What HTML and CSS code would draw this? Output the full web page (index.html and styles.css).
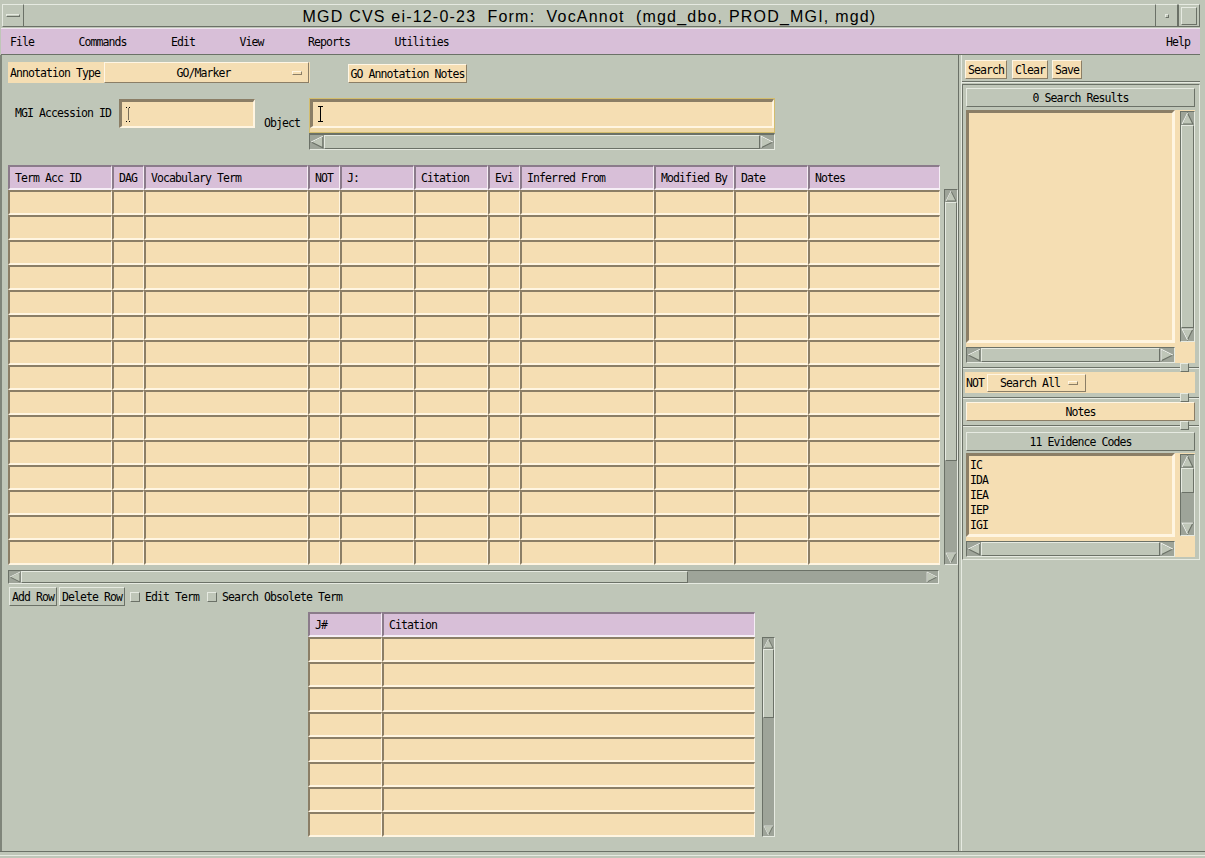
FILE: index.html
```html
<!DOCTYPE html>
<html>
<head>
<meta charset="utf-8">
<title>VocAnnot</title>
<link rel="stylesheet" href="styles.css">
</head>
<body>
<div class="win">
  <header class="titlebar">
    <div class="tb-menu"><span class="tb-dash"></span></div>
    <div class="tb-title">MGD CVS ei-12-0-23&nbsp; Form:&nbsp; VocAnnot&nbsp; (mgd_dbo, PROD_MGI, mgd)</div>
    <div class="tb-min"><span class="tb-dot"></span></div>
    <div class="tb-max"><span class="tb-box"></span></div>
  </header>
  <nav class="menubar">
    <span class="mi">File</span><span class="mi">Commands</span><span class="mi">Edit</span><span class="mi">View</span><span class="mi">Reports</span><span class="mi">Utilities</span><span class="mi help">Help</span>
  </nav>
  <div class="content">
    <section class="main">
      <div class="row1">
        <div class="anno">
          <span class="anno-lbl">Annotation Type</span>
          <div class="opt opt-anno"><span class="opt-text">GO/Marker</span><span class="opt-dash"></span></div>
        </div>
        <div class="btn btn-wheat btn-notes">GO Annotation Notes</div>
      </div>
      <div class="row2">
        <span class="lbl lbl-mgi">MGI Accession ID</span>
        <div class="tf tf-mgi"><svg class="caret caret-dot" viewBox="0 0 7 15"><path d="M1 0.5h2M4 0.5h2M3.5 1.5v12M1 14.5h2M4 14.5h2" stroke="#000" stroke-width="1" stroke-dasharray="1 1" fill="none"/></svg></div>
        <span class="lbl lbl-obj">Object</span>
        <div class="objblock">
          <div class="objfocus"><div class="tf tf-obj"><svg class="caret" viewBox="0 0 7 16"><path d="M1 0.5h5M3.5 0.5v15M1 15.5h5" stroke="#000" stroke-width="1" fill="none"/></svg></div></div>
          <div class="hsb hsb-obj">
            <svg class="arr" viewBox="0 0 12 12"><polygon points="1,6 11,1 11,11" class="ap"/><polyline points="11,1 1,6" class="al"/></svg>
            <div class="thumb fill"></div>
            <svg class="arr" viewBox="0 0 12 12"><polygon points="11,6 1,1 1,11" class="ap"/><polyline points="1,11 1,1 11,6" class="al"/></svg>
          </div>
        </div>
      </div>

      <div class="tablewrap">
        <div class="grid grid-main">
          <div class="h">Term Acc ID</div><div class="h">DAG</div><div class="h">Vocabulary Term</div><div class="h">NOT</div><div class="h">J:</div><div class="h">Citation</div><div class="h">Evi</div><div class="h">Inferred From</div><div class="h">Modified By</div><div class="h">Date</div><div class="h">Notes</div>
          <div></div><div></div><div></div><div></div><div></div><div></div><div></div><div></div><div></div><div></div><div></div>
          <div></div><div></div><div></div><div></div><div></div><div></div><div></div><div></div><div></div><div></div><div></div>
          <div></div><div></div><div></div><div></div><div></div><div></div><div></div><div></div><div></div><div></div><div></div>
          <div></div><div></div><div></div><div></div><div></div><div></div><div></div><div></div><div></div><div></div><div></div>
          <div></div><div></div><div></div><div></div><div></div><div></div><div></div><div></div><div></div><div></div><div></div>
          <div></div><div></div><div></div><div></div><div></div><div></div><div></div><div></div><div></div><div></div><div></div>
          <div></div><div></div><div></div><div></div><div></div><div></div><div></div><div></div><div></div><div></div><div></div>
          <div></div><div></div><div></div><div></div><div></div><div></div><div></div><div></div><div></div><div></div><div></div>
          <div></div><div></div><div></div><div></div><div></div><div></div><div></div><div></div><div></div><div></div><div></div>
          <div></div><div></div><div></div><div></div><div></div><div></div><div></div><div></div><div></div><div></div><div></div>
          <div></div><div></div><div></div><div></div><div></div><div></div><div></div><div></div><div></div><div></div><div></div>
          <div></div><div></div><div></div><div></div><div></div><div></div><div></div><div></div><div></div><div></div><div></div>
          <div></div><div></div><div></div><div></div><div></div><div></div><div></div><div></div><div></div><div></div><div></div>
          <div></div><div></div><div></div><div></div><div></div><div></div><div></div><div></div><div></div><div></div><div></div>
          <div></div><div></div><div></div><div></div><div></div><div></div><div></div><div></div><div></div><div></div><div></div>
        </div>
        <div class="vsb vsb-main">
          <svg class="arr" viewBox="0 0 12 12"><polygon points="6,1 11,11 1,11" class="ap"/><polyline points="1,11 6,1" class="al"/></svg>
          <div class="thumb" style="height:259px"></div>
          <div class="rest"></div>
          <svg class="arr" viewBox="0 0 12 12"><polygon points="6,11 1,1 11,1" class="ap"/><polyline points="6,11 1,1 11,1" class="al"/></svg>
        </div>
      </div>

      <div class="hsb hsb-main">
        <svg class="arr" viewBox="0 0 12 12"><polygon points="1,6 11,1 11,11" class="ap"/><polyline points="11,1 1,6" class="al"/></svg>
        <div class="thumb" style="width:667px"></div>
        <div class="rest"></div>
        <svg class="arr" viewBox="0 0 12 12"><polygon points="11,6 1,1 1,11" class="ap"/><polyline points="1,11 1,1 11,6" class="al"/></svg>
      </div>

      <div class="row-actions">
        <div class="btn btn-gray btn-add">Add Row</div>
        <div class="btn btn-gray btn-del">Delete Row</div>
        <span class="chk chk-edit"></span><span class="chk-lbl">Edit Term</span>
        <span class="chk chk-obs"></span><span class="chk-lbl">Search Obsolete Term</span>
      </div>

      <div class="lowerwrap">
        <div class="grid grid-lower">
          <div class="h">J#</div><div class="h">Citation</div>
          <div></div><div></div>
          <div></div><div></div>
          <div></div><div></div>
          <div></div><div></div>
          <div></div><div></div>
          <div></div><div></div>
          <div></div><div></div>
          <div></div><div></div>
        </div>
        <div class="vsb vsb-lower">
          <svg class="arr" viewBox="0 0 12 12"><polygon points="6,1 11,11 1,11" class="ap"/><polyline points="1,11 6,1" class="al"/></svg>
          <div class="thumb" style="height:69px"></div>
          <div class="rest"></div>
          <svg class="arr" viewBox="0 0 12 12"><polygon points="6,11 1,1 11,1" class="ap"/><polyline points="6,11 1,1 11,1" class="al"/></svg>
        </div>
      </div>
    </section>

    <div class="vsash"></div>

    <aside class="side">
      <div class="side-btns">
        <div class="btn btn-wheat sb-search">Search</div>
        <div class="btn btn-wheat sb-clear">Clear</div>
        <div class="btn btn-wheat sb-save">Save</div>
      </div>
      <div class="side-sep"></div>
      <div class="frame">
        <div class="plabel">0 Search Results</div>
        <div class="sw sw-results">
          <div class="list"></div>
          <div class="sw-v">
            <div class="vsb vsb-results">
              <svg class="arr" viewBox="0 0 12 12"><polygon points="6,1 11,11 1,11" class="ap"/><polyline points="1,11 6,1" class="al"/></svg>
              <div class="thumb fill"></div>
              <svg class="arr" viewBox="0 0 12 12"><polygon points="6,11 1,1 11,1" class="ap"/><polyline points="6,11 1,1 11,1" class="al"/></svg>
            </div>
          </div>
          <div class="sw-h">
            <div class="hsb hsb-side">
              <svg class="arr" viewBox="0 0 12 12"><polygon points="1,6 11,1 11,11" class="ap"/><polyline points="11,1 1,6" class="al"/></svg>
              <div class="thumb fill"></div>
              <svg class="arr" viewBox="0 0 12 12"><polygon points="11,6 1,1 1,11" class="ap"/><polyline points="1,11 1,1 11,6" class="al"/></svg>
            </div>
          </div>
          <div class="sw-corner"></div>
        </div>

        <div class="sash"><div class="sash-line"><span class="knob"></span></div></div>

        <div class="notrow">
          <span class="not-lbl">NOT</span>
          <div class="opt opt-not"><span class="opt-text">Search All</span><span class="opt-dash"></span></div>
        </div>

        <div class="sash"><div class="sash-line"><span class="knob"></span></div></div>

        <div class="btn btn-wheat btn-pnotes">Notes</div>

        <div class="sash"><div class="sash-line"><span class="knob"></span></div></div>

        <div class="plabel plabel-ev">11 Evidence Codes</div>
        <div class="sw sw-ev">
          <div class="list list-ev">
            <div>IC</div><div>IDA</div><div>IEA</div><div>IEP</div><div>IGI</div>
          </div>
          <div class="sw-v">
            <div class="vsb vsb-ev">
              <svg class="arr" viewBox="0 0 12 12"><polygon points="6,1 11,11 1,11" class="ap"/><polyline points="1,11 6,1" class="al"/></svg>
              <div class="thumb" style="height:25px"></div>
              <div class="rest"></div>
              <svg class="arr" viewBox="0 0 12 12"><polygon points="6,11 1,1 11,1" class="ap"/><polyline points="6,11 1,1 11,1" class="al"/></svg>
            </div>
          </div>
          <div class="sw-h">
            <div class="hsb hsb-side">
              <svg class="arr" viewBox="0 0 12 12"><polygon points="1,6 11,1 11,11" class="ap"/><polyline points="11,1 1,6" class="al"/></svg>
              <div class="thumb fill"></div>
              <svg class="arr" viewBox="0 0 12 12"><polygon points="11,6 1,1 1,11" class="ap"/><polyline points="1,11 1,1 11,6" class="al"/></svg>
            </div>
          </div>
          <div class="sw-corner"></div>
        </div>
      </div>
    </aside>
  </div>
  <div class="win-bottom"></div>
</div>
</body>
</html>
```

FILE: styles.css
```css
* { box-sizing: border-box; }
html, body { margin: 0; padding: 0; }
body {
  width: 1205px;
  height: 858px;
  overflow: hidden;
  background: #bfc6b8;
  font-family: "DejaVu Sans Mono", "Liberation Mono", monospace;
  font-size: 11.5px;
  letter-spacing: -0.92px;
  color: #000;
}
.win { display: flex; flex-direction: column; height: 858px; }

/* ---------- title bar ---------- */
.titlebar { height: 28px; padding: 4px 5px 0 2px; display: flex; }
.tb-menu {
  width: 22px; height: 23px;
  border: 1px solid; border-color: #e6eae1 #6b7167 #6b7167 #e6eae1;
  display: flex; align-items: center; justify-content: center;
}
.tb-dash {
  width: 14px; height: 3px;
  border: 1px solid; border-color: #e6eae1 #6b7167 #6b7167 #e6eae1;
}
.tb-title {
  flex: 1; height: 23px;
  border-top: 1px solid #e6eae1; border-bottom: 1px solid #6b7167;
  text-align: center;
  font-family: "Liberation Sans", Arial, sans-serif;
  font-size: 16px; letter-spacing: 1.2px; line-height: 23px;
}
.tb-min, .tb-max {
  height: 23px;
  border: 1px solid; border-color: #e6eae1 #6b7167 #6b7167 #6b7167;
  display: flex; align-items: center; justify-content: center;
}
.tb-min { width: 23px; }
.tb-max { width: 22px; }
.tb-dot { width: 4px; height: 4px; border: 1px solid; border-color: #e6eae1 #6b7167 #6b7167 #e6eae1; }
.tb-box { width: 16px; height: 18px; border: 1px solid; border-color: #e6eae1 #6b7167 #6b7167 #e6eae1; }

/* ---------- menu bar ---------- */
.menubar {
  height: 27px; margin: 0 5px 0 1px;
  background: #d8bfd8;
  border-top: 1px solid #efe3ef; border-bottom: 1px solid #6b7167;
  display: flex; align-items: center; padding-left: 9px; padding-top: 1px;
}
.mi { margin-right: 44.5px; }
.mi.help { margin-left: auto; margin-right: 10px; }

/* ---------- content ---------- */
.content {
  flex: 1; display: flex;
  box-shadow: inset 2px 0 0 #7f857a;
}
.win-bottom {
  height: 7px;
  border-top: 1px solid #6b7167;
  box-shadow: inset 0 3px 0 #bfc6b8, inset 0 4px 0 #e6eae1;
}
.main {
  width: 958px; flex: none;
  padding: 7px 0 0 8px;
  display: flex; flex-direction: column; align-items: flex-start;
}

/* buttons / option menus */
.btn {
  height: 19px; line-height: 18px; text-align: center;
  border: 1px solid; white-space: nowrap;
}
.btn-wheat { background: #f5deb3; border-color: #fff6e4 #8b7e66 #8b7e66 #fff6e4; }
.btn-gray { background: #bfc6b8; border-color: #e6eae1 #6b7167 #6b7167 #e6eae1; }

.opt {
  background: #f5deb3;
  border: 1px solid; border-color: #fff6e4 #8b7e66 #8b7e66 #fff6e4;
  display: flex; align-items: center;
}
.opt-text { flex: 1; text-align: center; }
.opt-dash {
  width: 10px; height: 4px; flex: none;
  border: 1px solid; border-color: #fff6e4 #8b7e66 #8b7e66 #fff6e4;
}

.row1 { display: flex; align-items: flex-start; height: 21px; }
.anno { display: flex; height: 21px; background: #f5deb3; padding-right: 1px; }
.anno-lbl { width: 96px; padding-left: 2px; line-height: 22px; white-space: nowrap; }
.opt-anno { width: 205px; height: 21px; padding-left: 10px; padding-top: 1px; }
.opt-anno .opt-dash { margin-right: 6px; }
.btn-notes { width: 119px; margin: 2px 0 0 38px; }

.row2 { display: flex; align-items: flex-start; margin-top: 15px; }
.lbl { white-space: nowrap; line-height: 13px; }
.lbl-mgi { margin: 9px 0 0 7px; width: 96px; }
.lbl-obj { margin: 19px 0 0 9px; width: 36px; }
.tf {
  background: #f5deb3;
  border-style: solid; border-width: 3px 2px 2px 3px;
  border-color: #8b7e66 #fff5e1 #fff5e1 #8b7e66;
  display: flex; align-items: center; padding-left: 3px;
}
.tf-mgi { width: 136px; height: 29px; margin: 1px 0 0 8px; }
.caret { width: 7px; height: 15px; }
.caret-dot { height: 15px; }
.objblock { margin-left: 9px; width: 466px; display: flex; flex-direction: column; }
.objfocus { border: 1px solid #d3bd6d; background: #eed7a6; padding-bottom: 4px; }
.tf-obj { height: 29px; padding-left: 4px; }
.tf-obj .caret { height: 16px; }

/* scrollbars */
.hsb, .vsb {
  display: flex; background: #9ea499;
  border: 1px solid; border-color: #6b7167 #e6eae1 #e6eae1 #6b7167;
}
.vsb { flex-direction: column; width: 14px; }
.hsb { height: 14px; }
.arr { width: 12px; height: 12px; flex: none; display: block; }
.ap { fill: #bfc6b8; stroke: #6b7167; stroke-width: 1; }
.al { fill: none; stroke: #eef1ea; stroke-width: 1; }
.thumb {
  flex: none; background: #bfc6b8;
  border: 1px solid; border-color: #e6eae1 #6b7167 #6b7167 #e6eae1;
}
.thumb.fill { flex: 1; }
.rest { flex: 1; }
.hsb-obj { height: 17px; border-width: 2px 1px 1px 1px; }
.hsb-obj .arr { width: 14px; height: 14px; }

/* tables */
.grid { display: grid; grid-auto-rows: 25px; }
.grid > div {
  background: #f5deb3;
  border-style: solid; border-width: 2px 1px 2px 2px;
  border-color: #8b7e66 #fff5e1 #fff5e1 #8b7e66;
}
.grid > .h {
  background: #d8bfd8;
  border-color: #8b7b8b #f6eef6 #f6eef6 #8b7b8b;
  padding-left: 5px; line-height: 22px; white-space: nowrap;
}
.grid-main { grid-template-columns: 104px 32px 164px 32px 74px 74px 32px 134px 80px 74px 132px; }
.grid-lower { grid-template-columns: 74px 373px; }

.tablewrap { display: flex; align-items: flex-start; margin-top: 15px; }
.vsb-main { height: 376px; margin: 24px 0 0 4px; }
.hsb-main { width: 931px; margin-top: 5px; }

.row-actions { display: flex; align-items: center; height: 19px; margin-top: 3px; }
.btn-add { width: 48px; margin-left: 1px; }
.btn-del { width: 66px; margin-left: 2px; }
.chk {
  width: 10px; height: 10px; flex: none;
  border: 1px solid; border-color: #e6eae1 #6b7167 #6b7167 #e6eae1;
}
.chk-edit { margin-left: 5px; }
.chk-obs { margin-left: 8px; }
.chk-lbl { margin-left: 5px; white-space: nowrap; }

.lowerwrap { display: flex; align-items: flex-start; margin: 6px 0 0 300px; }
.vsb-lower { width: 13px; height: 200px; margin: 25px 0 0 7px; }
.vsb-lower .arr { width: 11px; height: 11px; }

/* sash between main and side */
.vsash {
  width: 4px; flex: none;
  border-left: 1px solid #6b7167; border-right: 1px solid #e6eae1;
}

/* ---------- side panel ---------- */
.side { width: 243px; flex: none; padding-right: 5px; display: flex; flex-direction: column; }
.side-btns { display: flex; height: 26px; padding: 5px 0 0 3px; }
.sb-search { width: 42px; }
.sb-clear { width: 36px; margin-left: 5px; }
.sb-save { width: 30px; margin-left: 4px; }
.side-sep { height: 2px; border-top: 1px solid #6b7167; border-bottom: 1px solid #e6eae1; }
.frame {
  margin-top: 1px;
  border: 1px solid; border-color: #6b7167 #e6eae1 #e6eae1 #6b7167;
  padding: 3px 4px 2px 3px;
  display: flex; flex-direction: column;
}
.plabel {
  height: 19px; line-height: 18px; text-align: center;
  border: 1px solid; border-color: #e6eae1 #6b7167 #6b7167 #e6eae1;
}
.sw { background: #f5deb3; display: grid; grid-template-columns: 209px 20px; }
.sw-results { margin-top: 3px; grid-template-rows: 233px 20px; }
.sw-ev { margin-top: 2px; grid-template-rows: 84px 20px; }
.list {
  background: #f5deb3;
  border-style: solid; border-width: 3px 3px 3px 3px;
  border-color: #8b7e66 #fff5e1 #fff5e1 #8b7e66;
}
.list-ev { padding: 2px 0 0 1px; line-height: 15px; }
.sw-v { padding: 1px 0 0 5px; }
.vsb-results { width: 15px; height: 231px; }
.vsb-ev { width: 15px; height: 82px; }
.vsb-results .arr, .vsb-ev .arr { width: 13px; height: 13px; }
.sw-h { padding-top: 4px; }
.hsb-side { height: 16px; }
.hsb-side .arr { width: 14px; height: 14px; }

.sash { height: 9px; display: flex; flex-direction: column; justify-content: center; margin: 0 -4px 0 -3px; }
.sash-line {
  height: 2px; border-top: 1px solid #6b7167; border-bottom: 1px solid #e6eae1;
  display: flex; align-items: center; justify-content: flex-end;
}
.knob {
  width: 9px; height: 9px; flex: none; margin-right: 10px;
  background: #bfc6b8;
  border: 1px solid; border-color: #e6eae1 #6b7167 #6b7167 #e6eae1;
}
.notrow {
  height: 21px; background: #f5deb3;
  display: flex; align-items: center; padding-left: 1px; margin-left: -1px;
}
.not-lbl { width: 18px; }
.opt-not { width: 99px; height: 18px; margin-left: 3px; padding-left: 4px; }
.opt-not .opt-dash { margin-right: 7px; }
.btn-pnotes { width: 229px; }
.plabel-ev { margin-top: 2px; }
```
